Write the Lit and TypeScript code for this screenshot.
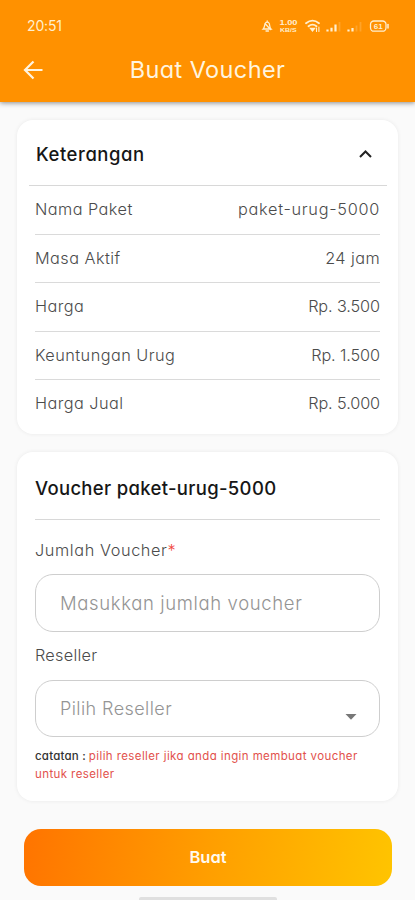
import { LitElement, html, css } from "lit";
import { customElement } from "lit/decorators.js";

const DETAILS = [
  { label: "Nama Paket", value: "paket-urug-5000", kind: "package" },
  { label: "Masa Aktif", value: "24 jam", kind: "duration" },
  { label: "Harga", value: "Rp. 3.500", kind: "price" },
  { label: "Keuntungan Urug", value: "Rp. 1.500", kind: "price" },
  { label: "Harga Jual", value: "Rp. 5.000", kind: "price" },
];

@customElement("status-bar")
class StatusBar extends LitElement {
  static styles = css`
    :host { display: flex; height: 52px; align-items: center; padding: 0 25px 0 27px; color: #ffefcf; justify-content: space-between; box-sizing: border-box; }
    .time { font-size: 14px; letter-spacing: -0.15px; line-height: 16px; }
    svg { display: block; }
    .net { font: 700 8px "Liberation Sans", sans-serif; }
    .unit { font: 700 6px "Liberation Sans", sans-serif; }
    .battery { font: 700 8px "Liberation Sans", sans-serif; }
  `;
  render() {
    return html`
      <span class="time">20:51</span>
      <svg width="130" height="16" viewBox="260 18 130 16" fill="none" stroke="#ffefcf" stroke-width="1.3" stroke-linecap="round">
        <path d="M263.200 29h7.800c-1.700-1.500-1-4.500-2-6-.8-1.300-2.800-1.300-3.600 0-1 1.500-.5 4.500-2.200 6zM267.200 20.800v1M266 31h2.500M265 23.500l5.500 6"/>
        <g fill="#ffefcf" stroke="none">
          <text class="net" x="279.500" y="25" textLength="18" lengthAdjust="spacingAndGlyphs">1.00</text>
          <text class="unit" x="280" y="32.200" textLength="16.500" lengthAdjust="spacingAndGlyphs">KB/S</text>
        </g>
        <path d="M306 23.300c4-3.300 9-3.300 13 0M308.500 26.200c2.500-2 5.500-2 8 0" stroke-width="1.800"/>
        <path d="M310.500 28.500h4l-2 2.500z" fill="#ffefcf"/>
        <path d="M316.500 28v3.500M318.900 27v4.500" stroke-width="1.100"/>
        <path d="M327.500 29.500v2M331.500 27.800v3.700M335.500 24.500v7M348.500 29.500v2M352.500 28v3.500" stroke-width="2.200" stroke-linecap="butt"/>
        <path d="M339.500 22v9.500M356.500 25.500v6M360.500 22v9.500" stroke-width="1.800" opacity=".2" stroke-linecap="butt"/>
        <rect x="370.500" y="21" width="15.500" height="10.200" rx="3.500"/>
        <path d="M388 24.500v3.500" stroke-width="1.500"/>
        <text class="battery" x="373.800" y="29" fill="#ffefcf" stroke="none" textLength="9">61</text>
      </svg>
    `;
  }
}

@customElement("app-root")
class AppRoot extends LitElement {
  static styles = css`
    :host {
      display: flex; flex-direction: column; height: 900px; overflow: hidden; box-sizing: border-box;
      background: #fafafa; color: #4b4b4b;
      font-family: Inter, "Liberation Sans", sans-serif; font-feature-settings: "cv11";
    }
    * { box-sizing: border-box; }
    svg { display: block; }
    header { flex: none; height: 102px; background: #ff9100; box-shadow: 0 1px 5px rgba(0, 0, 0, .45); }
    .bar { display: grid; grid-template-columns: 48px 1fr 48px; height: 36px; align-items: center; }
    .back { margin-left: 22px; }
    h1 { margin: 0; text-align: center; font-weight: 400; font-size: 23.500px; line-height: 36px; letter-spacing: .4px; color: #fff4df; }
    .card { flex: none; width: 381px; margin: 0 17px; border-radius: 16px; background: #fff; box-shadow: 0 0 4px rgba(0, 0, 0, .07); }
    .info { margin-top: 18px; height: 314px; padding: 0 11px 0 12px; }
    .info-head { display: flex; height: 66px; align-items: center; justify-content: space-between; padding: 2px 14px 0 7px; border-bottom: 1px solid #d8d8d8; }
    h2 { margin: 0; color: #161616; font-size: 18.500px; font-weight: 500; line-height: 24px; letter-spacing: .55px; }
    .rows { padding: 0 7px 0 6px; }
    .row { display: flex; height: 48.500px; align-items: center; justify-content: space-between; padding-bottom: 1.500px; border-bottom: 1px solid #dadada; font-size: 16.300px; font-weight: 300; letter-spacing: .45px; }
    .row:last-child { border: 0; padding-bottom: 2.500px; }
    .package { letter-spacing: .72px; }
    .price { letter-spacing: -.12px; }
    .duration { letter-spacing: .4px; }
    .form { margin-top: 18px; height: 349px; padding: 0 18px; }
    .form-head { height: 68px; padding-top: 24px; border-bottom: 1px solid #d8d8d8; }
    .form-title { letter-spacing: .32px; }
    .label { display: block; height: 54px; line-height: 24px; padding-top: 17.500px; font-size: 16.300px; font-weight: 300; letter-spacing: .6px; }
    .second { height: 48px; padding-top: 11px; letter-spacing: .25px; }
    .required { color: #f0443a; }
    .field { display: flex; align-items: center; justify-content: space-between; height: 57.500px; border: 1px solid #cecece; border-radius: 18px; padding: 0 22px 0 24px; font-size: 18px; font-weight: 300; letter-spacing: .42px; color: #949494; }
    .amount { font-size: 18.500px; letter-spacing: .63px; }
    .caret { margin-top: 18px; }
    .note { margin: 11px 0 0; font-size: 11.500px; line-height: 17.500px; color: #e2514c; letter-spacing: .4px; }
    .note-line { display: flex; gap: 3px; white-space: nowrap; }
    .note-key { color: #333; font-weight: 500; letter-spacing: .2px; }
    button { flex: none; height: 57px; margin: 28px 23px 0 24px; padding: 0; border: 0; border-radius: 17px; background: linear-gradient(97deg, #ff7400, #ff9e00 50%, #ffc400); color: #fffaf0; font: 600 16.500px/57px Inter, sans-serif; font-feature-settings: "cv11"; }
    .home { flex: none; width: 138px; height: 4px; margin: 11px auto 0; border-radius: 2px 2px 0 0; background: #e0e0e0; }
  `;
  render() {
    return html`
      <header>
        <status-bar></status-bar>
        <div class="bar">
          <svg class="back" width="22" height="22" viewBox="0 0 22 22" fill="none" stroke="#fff4df" stroke-width="2.200"><path d="M20.500 11H3.500M11.500 2.500L3 11l8.500 8.500"/></svg>
          <h1>Buat Voucher</h1>
        </div>
      </header>
      <section class="card info">
        <div class="info-head">
          <h2>Keterangan</h2>
          <svg width="15" height="10" viewBox="0 0 15 10" fill="none" stroke="#222" stroke-width="2"><path d="M2 8l5.500-5.500L13 8"/></svg>
        </div>
        <div class="rows">
          ${DETAILS.map((d) => html`<div class="row"><span>${d.label}</span><span class=${d.kind}>${d.value}</span></div>`)}
        </div>
      </section>
      <section class="card form">
        <div class="form-head"><h2 class="form-title">Voucher paket-urug-5000</h2></div>
        <span class="label">Jumlah Voucher<span class="required">*</span></span>
        <div class="field"><span class="amount">Masukkan jumlah voucher</span></div>
        <span class="label second">Reseller</span>
        <div class="field"><span>Pilih Reseller</span>
          <svg class="caret" width="12" height="6" viewBox="0 0 12 6"><path d="M.5 0h11L6 5.800z" fill="#777"/></svg>
        </div>
        <div class="note">
          <div class="note-line"><span class="note-key">catatan :</span><span>pilih reseller jika anda ingin membuat voucher</span></div>
          <div class="note-line"><span>untuk reseller</span></div>
        </div>
      </section>
      <button>Buat</button>
      <div class="home"></div>
    `;
  }
}
